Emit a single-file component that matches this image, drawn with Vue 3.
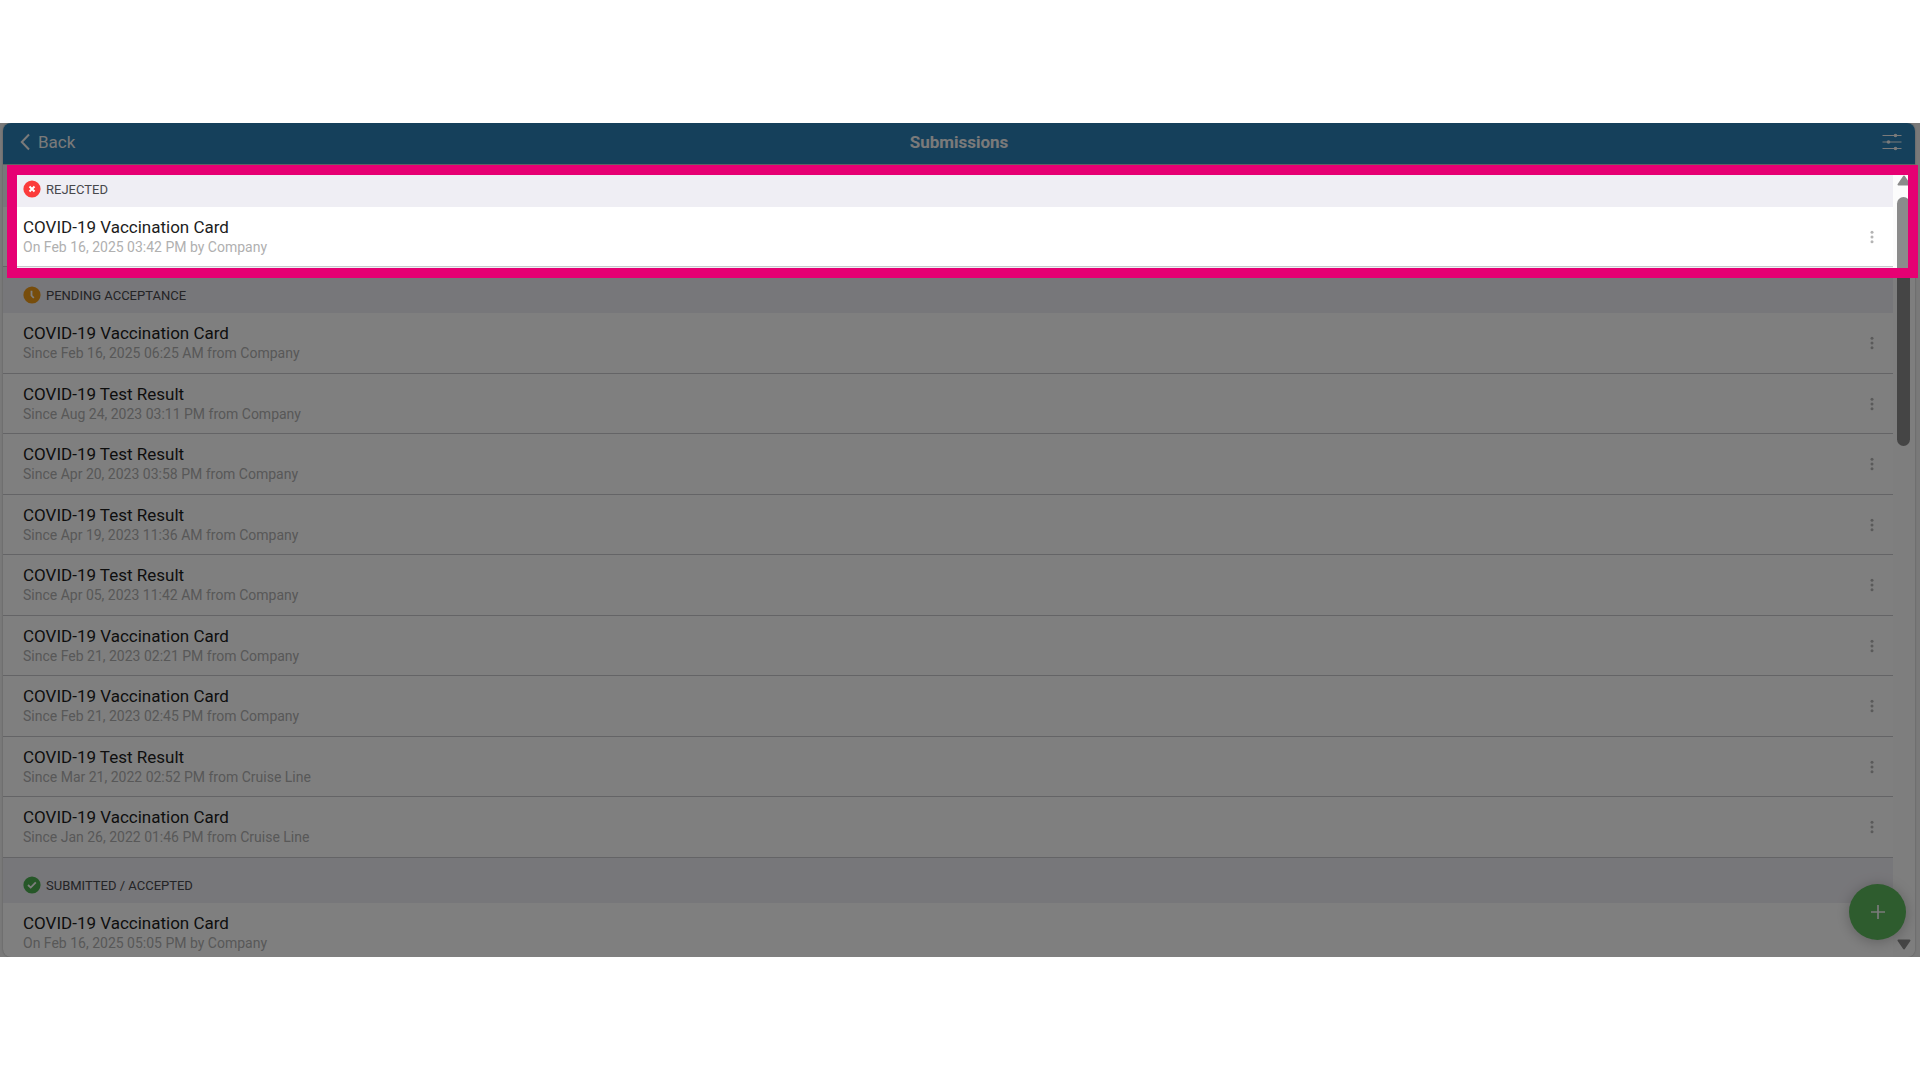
<template>
    <main class="screen">
        <div class="panel">
            <header class="topbar">
                <button type="button" class="btn-back">
                    <svg width="10" height="18" viewBox="0 0 10 18"><path d="M9 1.5 L1.8 9 L9 16.5" /></svg>
                    Back
                </button>
                <h1>Submissions</h1>
                <button type="button" class="btn-filter" aria-label="Filter">
                    <svg width="20" height="18" viewBox="0 0 20 18">
                        <path d="M0.5 2.5 H19.5 M0.5 9 H19.5 M0.5 15.5 H19.5" />
                        <circle cx="13.5" cy="2.5" r="1.8" />
                        <circle cx="6.5" cy="9" r="1.8" />
                        <circle cx="13.5" cy="15.5" r="1.8" />
                    </svg>
                </button>
            </header>

            <div class="content">
                <div class="lists">
                    <section v-for="group in groups" :key="group.title">
                        <h2 :class="group.status">
                            <svg width="18" height="18" viewBox="0 0 18 18">
                                <circle cx="9" cy="9" r="8.6" />
                                <path v-if="group.status === 'rejected'" class="cross" d="M6.5 6.5 L11.5 11.5 M11.5 6.5 L6.5 11.5" />
                                <path v-else-if="group.status === 'pending'" d="M8.5 4.8 V9.5 L10.8 12" />
                                <path v-else d="M5 9 L7.7 11.6 L12.8 6.4" />
                            </svg>
                            {{ group.title }}
                        </h2>
                        <ul>
                            <li v-for="item in group.items" :key="item.info">
                                <div class="text">
                                    <h3>{{ item.name }}</h3>
                                    <p>{{ item.info }}</p>
                                </div>
                                <button type="button" class="btn-more" aria-label="More options">
                                    <svg width="4" height="14" viewBox="0 0 4 14">
                                        <circle cx="2" cy="2.3" r="1.5" />
                                        <circle cx="2" cy="7" r="1.5" />
                                        <circle cx="2" cy="11.7" r="1.5" />
                                    </svg>
                                </button>
                            </li>
                        </ul>
                    </section>
                </div>

                <div class="scrollbar">
                    <svg width="14" height="11" viewBox="0 0 14 11"><path d="M7 1.5 L12.5 9.5 H1.5 Z" /></svg>
                    <div class="track">
                        <div class="thumb"></div>
                    </div>
                    <svg width="14" height="11" viewBox="0 0 14 11"><path d="M7 9.5 L12.5 1.5 H1.5 Z" /></svg>
                </div>
            </div>

            <button type="button" class="btn-add" aria-label="Add">
                <svg width="14" height="14" viewBox="0 0 14 14"><path d="M7 0 V14 M0 7 H14" /></svg>
            </button>
        </div>

        <div class="spotlight"></div>
    </main>
</template>

<script setup>
const CARD = 'COVID-19 Vaccination Card'
const TEST = 'COVID-19 Test Result'

const groups = [
    {
        status: 'rejected',
        title: 'REJECTED',
        items: [
            { name: CARD, info: 'On Feb 16, 2025 03:42 PM by Company' }
        ]
    },
    {
        status: 'pending',
        title: 'PENDING ACCEPTANCE',
        items: [
            { name: CARD, info: 'Since Feb 16, 2025 06:25 AM from Company' },
            { name: TEST, info: 'Since Aug 24, 2023 03:11 PM from Company' },
            { name: TEST, info: 'Since Apr 20, 2023 03:58 PM from Company' },
            { name: TEST, info: 'Since Apr 19, 2023 11:36 AM from Company' },
            { name: TEST, info: 'Since Apr 05, 2023 11:42 AM from Company' },
            { name: CARD, info: 'Since Feb 21, 2023 02:21 PM from Company' },
            { name: CARD, info: 'Since Feb 21, 2023 02:45 PM from Company' },
            { name: TEST, info: 'Since Mar 21, 2022 02:52 PM from Cruise Line' },
            { name: CARD, info: 'Since Jan 26, 2022 01:46 PM from Cruise Line' }
        ]
    },
    {
        status: 'accepted',
        title: 'SUBMITTED / ACCEPTED',
        items: [
            { name: CARD, info: 'On Feb 16, 2025 05:05 PM by Company' }
        ]
    }
]
</script>

<style>
body {
    margin: 0;
    background: #fff;
}
</style>

<style scoped>
.screen {
    position: relative;
    box-sizing: border-box;
    height: calc(100vh - 246px);
    margin: 123px 0;
    padding: 0 5px 0 3px;
    overflow: hidden;
    background: #f2f2f2;
    font-family: Roboto, "Liberation Sans", sans-serif;
}
.panel {
    position: relative;
    display: flex;
    flex-direction: column;
    height: 100%;
    overflow: hidden;
    border-radius: 8px;
    background: #fff;
    box-shadow: 0 0 2px rgba(0,0,0,0.3);
}
button {
    padding: 0;
    border: 0;
    background: none;
    font-family: inherit;
    cursor: pointer;
}
svg {
    display: block;
    flex: none;
}
h1, h2, h3, p, ul {
    margin: 0;
    padding: 0;
}

.topbar {
    display: grid;
    grid-template-columns: 1fr auto 1fr;
    align-items: center;
    height: 42px;
    padding: 0 13px 3px;
    border-bottom: 1px solid #c0c0c8;
    box-sizing: border-box;
    flex: none;
    background: #2a80b6;
    color: #f4f4f4;
}
.topbar h1 {
    font-size: 17px;
    line-height: 20px;
    font-weight: 700;
}
.btn-back {
    display: flex;
    align-items: center;
    gap: 8px;
    justify-self: start;
    padding-left: 4px;
    color: #f4f4f4;
    font-size: 17px;
    line-height: 20px;
}
.btn-back path {
    fill: none;
    stroke: #f4f4f4;
    stroke-width: 2;
}
.btn-filter {
    justify-self: end;
}
.btn-filter path {
    stroke: #f4f4f4;
    stroke-width: 1.2;
}
.btn-filter circle {
    fill: #f4f4f4;
}

.content {
    display: flex;
    flex: 1;
    min-height: 0;
}
.lists {
    flex: 1;
    overflow: hidden;
}
h2 {
    display: flex;
    align-items: flex-end;
    gap: 5px;
    height: 46px;
    box-sizing: border-box;
    padding: 0 20px 9px;
    background: #efeef4;
    color: #48484c;
    font-size: 13px;
    line-height: 17px;
    font-weight: 400;
}
h2.rejected {
    height: 42px;
}
h2.accepted {
    height: 45px;
}
h2 path {
    fill: none;
    stroke: #fff;
    stroke-width: 1.8;
}
.rejected circle { fill: #fb3b3b; }
.rejected .cross { stroke-width: 2; }
.pending circle { fill: #ef9a18; }
.accepted circle { fill: #4cae50; }

ul {
    list-style: none;
}
li {
    display: flex;
    align-items: center;
    justify-content: space-between;
    padding: 10px 19px 9px 20px;
    border-bottom: 1px solid #c8c8cc;
}
.pending + ul li:nth-child(odd) {
    padding-bottom: 10px;
}
h3 {
    color: #1c1c1c;
    font-size: 17px;
    line-height: 20px;
    font-weight: 400;
}
p {
    color: #b0b0b0;
    font-size: 14px;
    line-height: 20px;
}
.btn-more circle {
    fill: #b4b4b4;
}

.scrollbar {
    display: flex;
    flex-direction: column;
    align-items: center;
    flex: none;
    width: 22px;
    padding: 10px 1px 7px 0;
    box-sizing: border-box;
    background: #fcfcfc;
}
.scrollbar path {
    fill: #8b8b8b;
    stroke: #8b8b8b;
    stroke-width: 2;
    stroke-linejoin: round;
}
.track {
    flex: 1;
    padding-top: 11px;
}
.thumb {
    width: 13px;
    height: 249px;
    border-radius: 7px;
    background: #8b8b8b;
}

.btn-add {
    position: absolute;
    right: 9px;
    bottom: 17px;
    display: flex;
    align-items: center;
    justify-content: center;
    width: 57px;
    height: 56px;
    border-radius: 50%;
    background: #5cb85c;
    box-shadow: 0 2px 14px rgba(0,0,0,0.25);
}
.btn-add path {
    stroke: #f4f4f4;
    stroke-width: 1.7;
}

/* highlights the rejected group, everything around it is dimmed */
.spotlight {
    position: absolute;
    top: 42px;
    left: 7px;
    right: 2px;
    height: 93px;
    border: 10px solid #e60073;
    box-shadow: 0 0 0 9999px rgba(0,0,0,0.5);
    pointer-events: none;
}
</style>
